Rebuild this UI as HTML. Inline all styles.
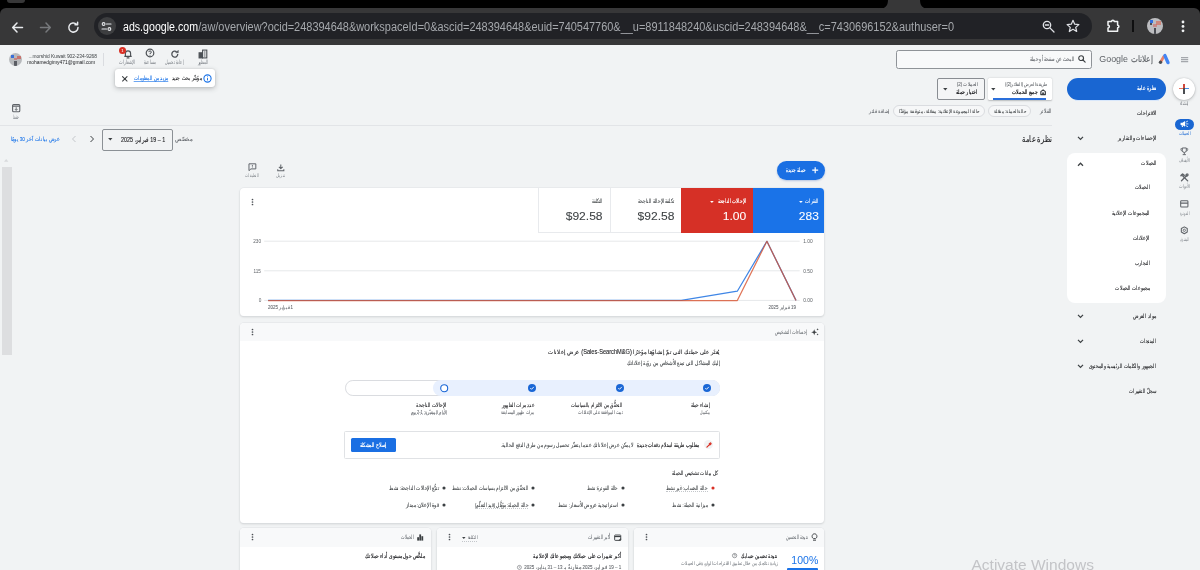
<!DOCTYPE html>
<html lang="ar">
<head>
<meta charset="utf-8">
<title>Google Ads</title>
<style>
*{box-sizing:border-box;margin:0;padding:0}
html,body{width:1200px;height:570px;overflow:hidden}
body{background:#f1f3f4;font-family:"Liberation Sans",sans-serif;color:#202124;position:relative}
.a{position:absolute}
svg{position:absolute;overflow:visible}
#tx{left:0;top:0;font-family:"Liberation Sans",sans-serif;will-change:transform}
.card{position:absolute;background:#fff;border-radius:4px;box-shadow:0 0 0 .6px #e2e4e7,0 1px 2px rgba(60,64,67,.22)}
.hd{position:absolute;left:0;top:0;right:0;height:18px;background:#f8f9fa;border-radius:4px 4px 0 0}
</style>
</head>
<body>
<div class="a" style="left:0px;top:0px;width:1200px;height:20px;background:#000"></div>
<div class="a" style="left:7px;top:0px;width:18px;height:3px;background:#373738;border-radius:0 0 4px 4px"></div>
<div class="a" style="left:0px;top:8px;width:1200px;height:37px;background:#373738;border-radius:6px 6px 0 0"></div>
<svg style="left:878px;top:0" width="52" height="9" viewBox="0 0 52 9"><path d="M0 9 C7 9 10 6 10 0 L42 0 C42 6 45 9 52 9 Z" fill="#373738"/></svg>
<div class="a" style="left:94px;top:13px;width:998px;height:26px;border-radius:13px;background:#212226"></div>
<div class="a" style="left:97.5px;top:17px;width:18px;height:18px;border-radius:50%;background:#3d3e40"></div>
<svg style="left:11px;top:20.5px" width="13" height="13" viewBox="0 0 13 13" fill="none" stroke="#e8eaed" stroke-width="1.5" stroke-linecap="round" stroke-linejoin="round"><path d="M11.5 6.5H2M6 2L1.7 6.5L6 11"/></svg>
<svg style="left:39px;top:20.5px" width="13" height="13" viewBox="0 0 13 13" fill="none" stroke="#77797c" stroke-width="1.5" stroke-linecap="round" stroke-linejoin="round"><path d="M1.5 6.5H11M7 2L11.3 6.5L7 11"/></svg>
<svg style="left:67px;top:20.6px" width="13" height="13" viewBox="0 0 13 13" fill="none" stroke="#e8eaed" stroke-width="1.5" stroke-linecap="round" stroke-linejoin="round"><path d="M11 6.5A4.6 4.6 0 1 1 9.6 3.2"/><path d="M10.6 1.2V3.8H8"/></svg>
<svg style="left:101px;top:21px" width="11" height="11" viewBox="0 0 11 11" fill="none" stroke="#e8eaed" stroke-width="1.1" stroke-linecap="round"><circle cx="2.6" cy="3" r="1.4"/><path d="M5.5 3H10"/><circle cx="8.4" cy="8" r="1.4"/><path d="M1 8H5.5"/></svg>
<svg style="left:1042px;top:20px" width="13" height="13" viewBox="0 0 13 13" fill="none" stroke="#dfe1e5" stroke-width="1.3" stroke-linecap="round"><circle cx="5" cy="5" r="3.7"/><path d="M7.9 7.9L12 12M3.3 5H6.7"/></svg>
<svg style="left:1066px;top:19px" width="14" height="14" viewBox="0 0 14 14" fill="none" stroke="#dfe1e5" stroke-width="1.2" stroke-linejoin="round"><path d="M7 1.3L8.7 5.2L12.9 5.6L9.7 8.4L10.7 12.5L7 10.3L3.3 12.5L4.3 8.4L1.1 5.6L5.3 5.2Z"/></svg>
<svg style="left:1106px;top:18.4px" width="15" height="15" viewBox="0 0 15 15" fill="none" stroke="#f1f3f4" stroke-width="1.5" stroke-linejoin="round"><path d="M2 3.6H5.6A1.3 1.3 0 0 1 8.2 3.6H11.6V7.2A1.3 1.3 0 0 1 11.6 9.8V13.2H2V10A1.4 1.4 0 0 0 2 7.2Z"/></svg>
<div class="a" style="left:1132px;top:20px;width:1.5px;height:12px;background:#0f0f10"></div>
<div class="a" style="left:1147px;top:18px;width:16px;height:16px;border-radius:50%;background:#bcbdc0;overflow:hidden"><div class="a" style="left:2.5px;top:2px;width:3px;height:3.4px;background:#2f6fe0"></div><div class="a" style="left:9px;top:3px;width:4.5px;height:4px;background:#d9624f;opacity:.6"></div><div class="a" style="left:6px;top:6px;width:4px;height:2.5px;background:#cf6a66;opacity:.6"></div><div class="a" style="left:7px;top:9.5px;width:2.4px;height:6.5px;background:#4a4c52"></div><div class="a" style="left:2.6px;top:5.4px;width:2.6px;height:2px;background:#4a4c52"></div></div>
<svg style="left:1181px;top:19.6px" width="4" height="13" viewBox="0 0 4 13" fill="#f1f3f4"><circle cx="2" cy="2" r="1.4"/><circle cx="2" cy="6.4" r="1.4"/><circle cx="2" cy="10.8" r="1.4"/></svg>
<div class="a" style="left:9px;top:53px;width:13px;height:13px;border-radius:50%;background:#b7b9bc;overflow:hidden"><div class="a" style="left:1.6px;top:2px;width:3px;height:3px;background:#3a6fd8"></div><div class="a" style="left:8px;top:3px;width:3.6px;height:3.4px;background:#d0564c;opacity:.7"></div><div class="a" style="left:5px;top:4.6px;width:3px;height:2.4px;background:#c9625e;opacity:.6"></div><div class="a" style="left:5.4px;top:7.6px;width:2.4px;height:5.4px;background:#5a5c63"></div></div>
<div class="a" style="left:102.5px;top:53px;width:1px;height:12.5px;background:#dadce0"></div>
<svg style="left:122.5px;top:49px" width="10" height="10" viewBox="0 0 10 10" fill="none" stroke="#4d5156" stroke-width="1.15"><path d="M2.4 7.2V4.5A2.6 2.6 0 0 1 7.6 4.5V7.2M1.3 7.3H8.7"/><path d="M4.1 8.9H5.9" stroke-linecap="round"/></svg>
<div class="a" style="left:118.7px;top:46.5px;width:7.4px;height:7.4px;border-radius:50%;background:#d93025"></div>
<svg style="left:144.8px;top:48.4px" width="10" height="10" viewBox="0 0 10 10" fill="none" stroke="#4d5156" stroke-width="1.2"><circle cx="5" cy="5" r="3.8"/><path d="M3.8 4.1A1.25 1.25 0 1 1 5 5.4V6.1" stroke-width="1"/><circle cx="5" cy="7.3" r=".5" fill="#4d5156" stroke="none"/></svg>
<svg style="left:169.8px;top:48.6px" width="9.6" height="9.6" viewBox="0 0 10 10" fill="none" stroke="#4d5156" stroke-width="1.35"><path d="M8.1 5.3A3.1 3.1 0 1 1 6.9 2.9"/><path d="M8.7 1.2V4H5.9Z" fill="#4d5156" stroke-width=".4" stroke-linejoin="round"/></svg>
<svg style="left:198px;top:48.5px" width="10" height="10" viewBox="0 0 10 10" fill="none" stroke="#4d5156" stroke-width="1.1"><rect x="1.1" y="3.8" width="3.3" height="5.1" fill="#4d5156"/><rect x="4.6" y="1.1" width="4.2" height="7.8"/><path d="M6 3H7.5M6 5H7.5M6 7H7.5" stroke-width=".9"/></svg>
<div class="a" style="left:115.2px;top:69.1px;width:100px;height:18.2px;background:#fff;border-radius:3px;box-shadow:0 1.5px 5px rgba(60,64,67,.3),0 0 1.5px rgba(60,64,67,.22)"></div>
<svg style="left:121.6px;top:75.9px" width="5.6" height="5.6" viewBox="0 0 6 6" stroke="#3c4043" stroke-width="1.15" stroke-linecap="round"><path d="M.6 .6L5.4 5.4M5.4 .6L.6 5.4"/></svg>
<svg style="left:203.3px;top:73.7px" width="9" height="9" viewBox="0 0 9 9" fill="none" stroke="#1a73e8" stroke-width="1.1"><circle cx="4.5" cy="4.5" r="3.6"/><path d="M4.5 4.1V6.4" stroke-width="1"/><circle cx="4.5" cy="2.8" r=".5" fill="#1a73e8" stroke="none"/></svg>
<svg style="left:11.8px;top:104.4px" width="8.4" height="8.4" viewBox="0 0 8.4 8.4" fill="none" stroke="#5f6368"><rect x=".6" y=".6" width="7.2" height="7.2" rx="1" stroke-width="1.1"/><path d="M.6 2.2H7.8" stroke-width="1.1"/><path d="M4.2 3.2V6.3M2.9 5.1L4.2 6.4L5.5 5.1" stroke-width=".9"/></svg>
<div class="a" style="left:0px;top:124.5px;width:1052px;height:1px;background:#e2e4e7"></div>
<svg style="left:70.8px;top:135.4px" width="6" height="8" viewBox="0 0 6 8" fill="none" stroke="#c4c7cb" stroke-width="1"><path d="M4.5 1L1.5 4L4.5 7"/></svg>
<svg style="left:89.4px;top:135.4px" width="6" height="8" viewBox="0 0 6 8" fill="none" stroke="#3c4043" stroke-width="1"><path d="M1.5 1L4.5 4L1.5 7"/></svg>
<div class="a" style="left:102px;top:129px;width:70.7px;height:21.7px;border:1px solid #8b9095;border-radius:2px"></div>
<svg style="left:108.3px;top:138.4px" width="4.6" height="2.6" viewBox="0 0 5 3"><path d="M0 0H5L2.5 2.8Z" fill="#3c4043"/></svg>
<svg style="left:1180.8px;top:56.5px" width="7.2" height="5.4" viewBox="0 0 8 6" stroke="#a4a7ac" stroke-width="1.35"><path d="M0 .8H8M0 3H8M0 5.2H8"/></svg>
<svg style="left:1158px;top:53px" width="13" height="13" viewBox="0 0 13 13"><path d="M5.7 3.6L3.2 8.2" stroke="#e8826b" stroke-width="2.8" stroke-linecap="round"/><path d="M6.9 2.6L10 9.6" stroke="#4285f4" stroke-width="3.4" stroke-linecap="round"/><circle cx="2.5" cy="9.2" r="1.7" fill="#4a4d51"/></svg>
<div class="a" style="left:896px;top:50px;width:196px;height:18.8px;border:1px solid #8f9398;border-radius:2.5px;background:#f8f9fa"></div>
<svg style="left:1077.6px;top:55.3px" width="7.6" height="7.6" viewBox="0 0 7 7" fill="none" stroke="#3c4043" stroke-width="1.05"><circle cx="2.9" cy="2.9" r="2.2"/><path d="M4.6 4.6L6.6 6.6" stroke-linecap="round"/></svg>
<div class="a" style="left:1173px;top:77.5px;width:22px;height:22px;border-radius:50%;background:#fff;box-shadow:0 1px 3px rgba(60,64,67,.3),0 0 1px rgba(60,64,67,.3)"></div>
<div class="a" style="left:1179.2px;top:87.6px;width:5px;height:1.9px;background:#e8735f"></div>
<div class="a" style="left:1184.2px;top:87.6px;width:5px;height:1.9px;background:#4a8fe8"></div>
<div class="a" style="left:1183.1px;top:84px;width:1.9px;height:4.6px;background:#d0473c"></div>
<div class="a" style="left:1183.1px;top:87.6px;width:1.9px;height:6px;background:#4a4d51"></div>
<div class="a" style="left:1067.4px;top:78px;width:98.6px;height:22px;border-radius:11px;background:#1966d2"></div>
<div class="a" style="left:1075px;top:100.2px;width:84px;height:1px;background:#d2e3fc;opacity:.8"></div>
<div class="a" style="left:987.5px;top:78px;width:64.2px;height:22.4px;background:#fff;border-radius:1.5px;box-shadow:0 .5px 1.5px rgba(60,64,67,.3);overflow:hidden"><div class="a" style="left:5.5px;width:53px;bottom:0;height:2px;background:#2a6fdb"></div></div>
<svg style="left:1040px;top:88.6px" width="6.2" height="6.2" viewBox="0 0 6 6" fill="none" stroke="#3c4043" stroke-width="1.1" stroke-linejoin="round"><path d="M.8 5.4V2.6L3 .8L5.2 2.6V5.4Z"/><path d="M2.3 5.4V3.7H3.7V5.4Z" stroke-width=".6" fill="#3c4043"/></svg>
<svg style="left:991.4px;top:88px" width="4.6" height="2.6" viewBox="0 0 5 3"><path d="M0 0H5L2.5 2.8Z" fill="#3c4043"/></svg>
<div class="a" style="left:937px;top:78px;width:47.8px;height:22px;border:1.2px solid #898d92;border-radius:2px;background:#f4f5f6"></div>
<svg style="left:943px;top:87.8px" width="4.6" height="2.6" viewBox="0 0 5 3"><path d="M0 0H5L2.5 2.8Z" fill="#3c4043"/></svg>
<div class="a" style="left:988px;top:104.6px;width:43.3px;height:12.2px;border:1px solid #dadce0;border-radius:6.1px;background:#f6f7f8"></div>
<div class="a" style="left:893.3px;top:104.6px;width:91.7px;height:12.2px;border:1px solid #dadce0;border-radius:6.1px;background:#f6f7f8"></div>
<div class="a" style="left:1175px;top:118.7px;width:19px;height:11.1px;border-radius:5.6px;background:#1966d2"></div>
<svg style="left:1180.3px;top:120.4px" width="8.4" height="7.8" viewBox="0 0 9 8" fill="#fff"><path d="M.6 2.8H2.6L5.4 .9V7L2.6 5.2H.6Z"/><path d="M1.6 5.2H2.8L3.3 7.4H2.1Z"/><path d="M6.3 2.1L8.2 1.1M6.5 4H8.6M6.3 5.9L8.2 6.9" stroke="#fff" stroke-width=".8" stroke-linecap="round"/></svg>
<svg style="left:1180px;top:146.5px" width="8.6" height="8.6" viewBox="0 0 9 9" fill="none" stroke="#5f6368" stroke-width="1"><path d="M2.4 1H6.6V3.6A2.1 2.1 0 0 1 2.4 3.6Z"/><path d="M2.4 1.8H.9V2.6A1.6 1.6 0 0 0 2.5 4.2M6.6 1.8H8.1V2.6A1.6 1.6 0 0 1 6.5 4.2" stroke-width=".8"/><path d="M4.5 5.7V7.6M2.8 8H6.2"/></svg>
<svg style="left:1179.8px;top:173.4px" width="9" height="9" viewBox="0 0 9 9" fill="none" stroke="#5f6368" stroke-linecap="round"><path d="M2.6 2.8L7.7 7.9" stroke-width="1.3"/><path d="M6.2 3L1.5 7.7" stroke-width="1.3"/><path d="M1 2.6L2.6 1L4.2 2.4" stroke-width="1.5" stroke-linejoin="round"/><path d="M5.6 2.2A1.7 1.7 0 0 1 7.9 .9L6.9 1.9L7.3 2.4L8.3 1.5A1.7 1.7 0 0 1 6.6 3.4" stroke-width=".9" fill="#5f6368"/></svg>
<svg style="left:1180px;top:199.8px" width="8.6" height="7.8" viewBox="0 0 9 8" fill="none" stroke="#5f6368" stroke-width="1.1"><rect x=".7" y=".8" width="7.6" height="6.4" rx=".8"/><path d="M.7 3.2H8.3" stroke-width="1.3"/></svg>
<svg style="left:1180px;top:226.2px" width="8.6" height="8.6" viewBox="0 0 9 9" fill="none" stroke="#5f6368"><path d="M4.5 .9L7.6 2.7V6.3L4.5 8.1L1.4 6.3V2.7Z" stroke-width="1.1" stroke-linejoin="round"/><circle cx="4.5" cy="4.5" r="1.2" stroke-width=".9"/></svg>
<svg style="left:1077.2px;top:136.2px" width="7" height="4.6" viewBox="0 0 7 4.6" fill="none" stroke="#3c4043" stroke-width="1.25"><path d="M1 .9L3.5 3.4L6 .9"/></svg>
<div class="a" style="left:1067.3px;top:153px;width:98.4px;height:150px;background:#fff;border-radius:8px"></div>
<svg style="left:1077.1px;top:162.0px" width="7" height="4.6" viewBox="0 0 7 4.6" fill="none" stroke="#3c4043" stroke-width="1.25"><path d="M1 3.7L3.5 1.2L6 3.7"/></svg>
<svg style="left:1077.0px;top:314.2px" width="7" height="4.6" viewBox="0 0 7 4.6" fill="none" stroke="#3c4043" stroke-width="1.25"><path d="M1 .9L3.5 3.4L6 .9"/></svg>
<svg style="left:1077.0px;top:339.2px" width="7" height="4.6" viewBox="0 0 7 4.6" fill="none" stroke="#3c4043" stroke-width="1.25"><path d="M1 .9L3.5 3.4L6 .9"/></svg>
<svg style="left:1077.0px;top:364.2px" width="7" height="4.6" viewBox="0 0 7 4.6" fill="none" stroke="#3c4043" stroke-width="1.25"><path d="M1 .9L3.5 3.4L6 .9"/></svg>
<div class="a" style="left:1.9px;top:166.6px;width:9.7px;height:188.6px;background:#dddee0"></div>
<svg style="left:4.4px;top:159.2px" width="4.4" height="2.8" viewBox="0 0 5 3"><path d="M0 3H5L2.5 0Z" fill="#d8dadd"/></svg>
<svg style="left:247.6px;top:163.2px" width="8.8" height="8.4" viewBox="0 0 9 8.5" fill="none" stroke="#5f6368" stroke-width="1"><path d="M1 .8H8V6H3L1 7.8Z" stroke-linejoin="round"/><path d="M4.5 2V3.7" stroke-width=".9"/><circle cx="4.5" cy="4.8" r=".4" fill="#5f6368" stroke="none"/></svg>
<svg style="left:276.6px;top:163.6px" width="7.6" height="7.6" viewBox="0 0 8 8" fill="none" stroke="#5f6368" stroke-width="1.1"><path d="M4 .6V4.6M2 3L4 5L6 3" stroke-linejoin="round"/><path d="M.8 5.6V7.2H7.2V5.6"/></svg>
<div class="a" style="left:777px;top:161.3px;width:47.5px;height:18.8px;border-radius:9.4px;background:#1a6fe3;box-shadow:0 1px 2px rgba(26,80,180,.28)"></div>
<svg style="left:811.8px;top:167.3px" width="6.4" height="6.4" viewBox="0 0 6 6" stroke="#fff" stroke-width="1.1"><path d="M3 .2V5.8M.2 3H5.8"/></svg>
<div class="card" style="left:239.8px;top:188px;width:584.6px;height:128px"></div>
<svg style="left:251.3px;top:198.3px" width="3" height="8" viewBox="0 0 3 8" fill="#4d5156"><circle cx="1.5" cy="1.5" r=".85"/><circle cx="1.5" cy="4" r=".85"/><circle cx="1.5" cy="6.5" r=".85"/></svg>
<div class="a" style="left:537.5px;top:188.3px;width:72px;height:45px;border-left:1px solid #e8eaed;border-bottom:1px solid #e8eaed"></div>
<div class="a" style="left:609.5px;top:188.3px;width:71.4px;height:45px;border-left:1px solid #e8eaed;border-bottom:1px solid #e8eaed"></div>
<div class="a" style="left:680.8px;top:188.2px;width:71.8px;height:45px;background:#d63026"></div>
<div class="a" style="left:752.5px;top:188.2px;width:71.9px;height:45px;background:#1a73e8;border-radius:0 4px 0 0"></div>
<svg style="left:798.6px;top:200.6px" width="3.8" height="2.2" viewBox="0 0 5 3"><path d="M0 0H5L2.5 2.8Z" fill="#fff"/></svg>
<svg style="left:710px;top:200.6px" width="3.8" height="2.2" viewBox="0 0 5 3"><path d="M0 0H5L2.5 2.8Z" fill="#fff"/></svg>
<svg style="left:0;top:0" width="1200" height="570" viewBox="0 0 1200 570" fill="none"><path d="M264.2 241.2H799.7" stroke="#e6e8ea" stroke-width="1"/><path d="M264.2 270.8H799.7" stroke="#e6e8ea" stroke-width="1"/><path d="M264.2 300.4H799.7" stroke="#e6e8ea" stroke-width="1"/><path d="M268.1 300.4H681.3L737.3 291.2L766.9 241.3L796 300.4" stroke="#3f86e6" stroke-width="1.25" stroke-linejoin="round"/><path d="M268.1 300.5H737.3L766.9 241.3L796 300.5" stroke="#d8522f" stroke-width="1.25" stroke-linejoin="round" opacity=".8"/></svg>
<div class="card" style="left:239.8px;top:322.6px;width:584.6px;height:200px"><div class="hd"></div></div>
<svg style="left:251.3px;top:327.8px" width="3" height="8" viewBox="0 0 3 8" fill="#4d5156"><circle cx="1.5" cy="1.5" r=".85"/><circle cx="1.5" cy="4" r=".85"/><circle cx="1.5" cy="6.5" r=".85"/></svg>
<svg style="left:810.8px;top:328px" width="8" height="8" viewBox="0 0 8 8" fill="#3c4043"><path d="M3.2 1.2L4 3.4L6.2 4.2L4 5L3.2 7.2L2.4 5L.2 4.2L2.4 3.4Z"/><path d="M6.6 .2L6.95 1.05L7.8 1.4L6.95 1.75L6.6 2.6L6.25 1.75L5.4 1.4L6.25 1.05Z"/><path d="M6.6 5.4L6.9 6.1L7.6 6.4L6.9 6.7L6.6 7.4L6.3 6.7L5.6 6.4L6.3 6.1Z"/></svg>
<div class="a" style="left:345.2px;top:380.2px;width:374.8px;height:15.7px;border-radius:7.85px;background:#fff;border:1px solid #dadce0"></div>
<div class="a" style="left:433.4px;top:380.2px;width:286.6px;height:15.7px;border-radius:7.85px;background:#e8f0fe"></div>
<svg style="left:703px;top:384px" width="8" height="8" viewBox="0 0 8 8"><circle cx="4" cy="4" r="4" fill="#1a67d6"/><path d="M2.3 4.1L3.5 5.3L5.8 2.9" fill="none" stroke="#fff" stroke-width=".9"/></svg>
<svg style="left:615.5px;top:384px" width="8" height="8" viewBox="0 0 8 8"><circle cx="4" cy="4" r="4" fill="#1a67d6"/><path d="M2.3 4.1L3.5 5.3L5.8 2.9" fill="none" stroke="#fff" stroke-width=".9"/></svg>
<svg style="left:527.6px;top:384px" width="8" height="8" viewBox="0 0 8 8"><circle cx="4" cy="4" r="4" fill="#1a67d6"/><path d="M2.3 4.1L3.5 5.3L5.8 2.9" fill="none" stroke="#fff" stroke-width=".9"/></svg>
<svg style="left:439.8px;top:383.8px" width="8.4" height="8.4" viewBox="0 0 8.4 8.4"><circle cx="4.2" cy="4.2" r="3.5" fill="#fff" stroke="#1a67d6" stroke-width="1.1"/></svg>
<div class="a" style="left:410.6px;top:414.4px;width:36.4px;height:0px;border-top:.5px dotted #c4c7cb"></div>
<div class="a" style="left:343.5px;top:431.4px;width:376.2px;height:28px;border:1px solid #e0e2e5;border-radius:1.5px"></div>
<div class="a" style="left:350.8px;top:438.3px;width:45.2px;height:13.7px;background:#1a6fe3;border-radius:1.5px"></div>
<div class="a" style="left:704.1px;top:440.1px;width:9px;height:9px;border-radius:50%;background:#f1f3f4"></div>
<svg style="left:705.6px;top:441.6px" width="6" height="6" viewBox="0 0 6 6" fill="none" stroke="#d93025" stroke-linecap="round"><path d="M.9 5.1L3.4 2.6" stroke-width="1.2"/><path d="M3.1 1.6A1.5 1.5 0 0 1 5 .9L4 1.9L4.3 2.3L5.2 1.4A1.5 1.5 0 0 1 3.4 3" stroke-width=".9" fill="#d93025"/></svg>
<svg style="left:710.6px;top:486.3px" width="4" height="4" viewBox="0 0 4 4"><circle cx="2" cy="2" r="1.55" fill="#d93025"/></svg>
<div class="a" style="left:666px;top:490.9px;width:41.6px;height:0px;border-top:.5px dotted #c4c7cb"></div>
<svg style="left:620.6px;top:486.3px" width="4" height="4" viewBox="0 0 4 4"><circle cx="2" cy="2" r="1.55" fill="#3c4043"/></svg>
<svg style="left:531.4px;top:486.3px" width="4" height="4" viewBox="0 0 4 4"><circle cx="2" cy="2" r="1.55" fill="#3c4043"/></svg>
<svg style="left:441.7px;top:486.3px" width="4" height="4" viewBox="0 0 4 4"><circle cx="2" cy="2" r="1.55" fill="#3c4043"/></svg>
<svg style="left:710.6px;top:503.2px" width="4" height="4" viewBox="0 0 4 4"><circle cx="2" cy="2" r="1.55" fill="#3c4043"/></svg>
<svg style="left:620.6px;top:503.2px" width="4" height="4" viewBox="0 0 4 4"><circle cx="2" cy="2" r="1.55" fill="#3c4043"/></svg>
<svg style="left:531.4px;top:503.2px" width="4" height="4" viewBox="0 0 4 4"><circle cx="2" cy="2" r="1.55" fill="#3c4043"/></svg>
<div class="a" style="left:475px;top:507.8px;width:53.4px;height:0px;border-top:.5px dotted #c4c7cb"></div>
<svg style="left:441.7px;top:503.2px" width="4" height="4" viewBox="0 0 4 4"><circle cx="2" cy="2" r="1.55" fill="#3c4043"/></svg>
<div class="card" style="left:633.8px;top:528.4px;width:190.6px;height:60px"><div class="hd" style="height:18.8px"></div></div>
<div class="card" style="left:437.2px;top:528.4px;width:190.4px;height:60px"><div class="hd" style="height:18.8px"></div></div>
<div class="card" style="left:240.2px;top:528.4px;width:190.4px;height:60px"><div class="hd" style="height:18.8px"></div></div>
<svg style="left:811px;top:533.4px" width="7" height="8.4" viewBox="0 0 7 8.4" fill="none" stroke="#3c4043" stroke-width=".95"><path d="M2.3 5.6C.2 4.2 1 .8 3.5 .8C6 .8 6.8 4.2 4.7 5.6Z" stroke-linejoin="round"/><path d="M2.4 7.2H4.6" stroke-linecap="round"/></svg>
<svg style="left:645.3px;top:533.4px" width="3" height="8" viewBox="0 0 3 8" fill="#4d5156"><circle cx="1.5" cy="1.5" r=".85"/><circle cx="1.5" cy="4" r=".85"/><circle cx="1.5" cy="6.5" r=".85"/></svg>
<div class="a" style="left:787px;top:568.3px;width:31px;height:2px;background:#1a73e8;border-radius:1px 1px 0 0"></div>
<svg style="left:732.4px;top:553.2px" width="5.2" height="5.2" viewBox="0 0 6 6" fill="none" stroke="#5f6368" stroke-width=".7"><circle cx="3" cy="3" r="2.5"/><path d="M2.2 2.5A.85 .85 0 1 1 3 3.3V3.8" stroke-width=".6"/></svg>
<svg style="left:614.2px;top:533.8px" width="7.6" height="7.4" viewBox="0 0 8 7.6" fill="none" stroke="#3c4043" stroke-width="1"><rect x=".7" y="1" width="6.4" height="5.6" rx=".6"/><path d="M.7 2.6H7.1" stroke-width="1.2"/><path d="M5 6.6H7.1V4.6Z" fill="#3c4043" stroke-width=".4"/></svg>
<svg style="left:448.0px;top:533.4px" width="3" height="8" viewBox="0 0 3 8" fill="#4d5156"><circle cx="1.5" cy="1.5" r=".85"/><circle cx="1.5" cy="4" r=".85"/><circle cx="1.5" cy="6.5" r=".85"/></svg>
<svg style="left:462.4px;top:536.6px" width="3.6" height="2.1" viewBox="0 0 5 3"><path d="M0 0H5L2.5 2.8Z" fill="#3c4043"/></svg>
<div class="a" style="left:461.6px;top:540.9px;width:15.8px;height:0px;border-top:.5px dotted #c4c7cb"></div>
<svg style="left:516.6px;top:565.2px" width="4.8" height="4.8" viewBox="0 0 6 6" fill="none" stroke="#5f6368" stroke-width=".7"><circle cx="3" cy="3" r="2.5"/><path d="M3 1.6V3.1L4 3.7" stroke-width=".6"/></svg>
<svg style="left:417.4px;top:534px" width="6.4" height="6.6" viewBox="0 0 6.4 6.6" fill="#3c4043"><rect x=".2" y="3.2" width="1.8" height="3.4"/><rect x="2.3" y=".4" width="1.8" height="6.2"/><rect x="4.4" y="2.2" width="1.8" height="4.4"/></svg>
<svg style="left:251.4px;top:533.4px" width="3" height="8" viewBox="0 0 3 8" fill="#4d5156"><circle cx="1.5" cy="1.5" r=".85"/><circle cx="1.5" cy="4" r=".85"/><circle cx="1.5" cy="6.5" r=".85"/></svg>
<svg id="tx" width="1200" height="570" viewBox="0 0 1200 570">
<text x="123" y="30.92" font-size="12" fill="#ffffff" font-weight="400" textLength="75" lengthAdjust="spacingAndGlyphs" >ads.google.com</text>
<text x="198.3" y="30.92" font-size="12" fill="#a5a8ac" font-weight="400" textLength="755.7" lengthAdjust="spacingAndGlyphs" >/aw/overview?ocid=248394648&amp;workspaceId=0&amp;ascid=248394648&amp;euid=740547760&amp;__u=8911848240&amp;uscid=248394648&amp;__c=7430696152&amp;authuser=0</text>
<text x="28.5" y="58.32" font-size="5.6" fill="#3c4043" font-weight="400" textLength="68.5" lengthAdjust="spacingAndGlyphs" >...morshid Kuwait 902-234-9268</text>
<text x="27.2" y="64.22" font-size="5.6" fill="#202124" font-weight="400" textLength="68" lengthAdjust="spacingAndGlyphs" >mohamedgimy471@gmail.com</text>
<text x="121.6" y="51.78" font-size="4.4" fill="#fff" font-weight="700" textLength="1.8" lengthAdjust="spacingAndGlyphs" >1</text>
<text x="135.65" y="63.79" font-size="5.75" fill="#7d8288" font-weight="401" direction="rtl" text-anchor="start" textLength="16.5" lengthAdjust="spacingAndGlyphs" >الإشعارات</text>
<text x="156.0" y="63.79" font-size="5.75" fill="#7d8288" font-weight="401" direction="rtl" text-anchor="start" textLength="12.4" lengthAdjust="spacingAndGlyphs" >مساعدة</text>
<text x="184.1" y="63.79" font-size="5.75" fill="#7d8288" font-weight="401" direction="rtl" text-anchor="start" textLength="19" lengthAdjust="spacingAndGlyphs" >إعادة تحميل</text>
<text x="208.5" y="63.79" font-size="5.75" fill="#7d8288" font-weight="401" direction="rtl" text-anchor="start" textLength="11" lengthAdjust="spacingAndGlyphs" >المظهر</text>
<text x="168.3" y="80.15" font-size="5.98" fill="#1a73e8" font-weight="400" direction="rtl" text-anchor="start" textLength="34.5" lengthAdjust="spacingAndGlyphs" text-decoration="underline" stroke="#1a73e8" stroke-width="0.10">مزيد من المعلومات</text>
<text x="201.8" y="80.15" font-size="5.98" fill="#202124" font-weight="400" direction="rtl" text-anchor="start" textLength="30.3" lengthAdjust="spacingAndGlyphs"  stroke="#202124" stroke-width="0.10">مؤشّر بحث جديد</text>
<text x="19.05" y="119.43" font-size="5.52" fill="#7d8288" font-weight="401" direction="rtl" text-anchor="start" textLength="6.5" lengthAdjust="spacingAndGlyphs" >حفظ</text>
<text x="59.8" y="141.34" font-size="5.98" fill="#1a73e8" font-weight="400" direction="rtl" text-anchor="start" textLength="49.3" lengthAdjust="spacingAndGlyphs"  stroke="#1a73e8" stroke-width="0.10">عرض بيانات آخر 30 يومًا</text>
<text x="165.2" y="141.56" font-size="7.24" fill="#202124" font-weight="400" direction="rtl" text-anchor="start" textLength="44.2" lengthAdjust="spacingAndGlyphs"  stroke="#202124" stroke-width="0.12">1 – 19 فبراير، 2025</text>
<text x="192.3" y="141.39" font-size="5.75" fill="#5f6368" font-weight="400" direction="rtl" text-anchor="start" textLength="16.9" lengthAdjust="spacingAndGlyphs"  stroke="#5f6368" stroke-width="0.09">مخصّص</text>
<text x="1099.3" y="62.45" font-size="9.3" fill="#5f6368" font-weight="400" textLength="28.7" lengthAdjust="spacingAndGlyphs" >Google</text>
<text x="1153" y="62.45" font-size="9.2" fill="#5f6368" font-weight="400" direction="rtl" text-anchor="start" textLength="22" lengthAdjust="spacingAndGlyphs"  stroke="#5f6368" stroke-width="0.15">إعلانات</text>
<text x="1074.4" y="61.09" font-size="5.75" fill="#5f6368" font-weight="400" direction="rtl" text-anchor="start" textLength="44.5" lengthAdjust="spacingAndGlyphs"  stroke="#5f6368" stroke-width="0.09">البحث عن صفحة أو حملة</text>
<text x="1188.25" y="104.77" font-size="5.29" fill="#7d8288" font-weight="401" direction="rtl" text-anchor="start" textLength="8.5" lengthAdjust="spacingAndGlyphs" >إنشاء</text>
<text x="1157" y="89.65" font-size="5.98" fill="#fff" font-weight="700" direction="rtl" text-anchor="start" textLength="20" lengthAdjust="spacingAndGlyphs" >نظرة عامة</text>
<text x="1047.5" y="86.47" font-size="5.29" fill="#5f6368" font-weight="400" direction="rtl" text-anchor="start" textLength="42.5" lengthAdjust="spacingAndGlyphs"  stroke="#5f6368" stroke-width="0.08">طريقة العرض (الفلاتر(2))</text>
<text x="1037.5" y="93.62" font-size="5.86" fill="#202124" font-weight="700" direction="rtl" text-anchor="start" textLength="25.5" lengthAdjust="spacingAndGlyphs" >جميع الحملات</text>
<text x="978" y="86.47" font-size="5.29" fill="#5f6368" font-weight="400" direction="rtl" text-anchor="start" textLength="21.3" lengthAdjust="spacingAndGlyphs"  stroke="#5f6368" stroke-width="0.08">الحملات (2)</text>
<text x="978" y="93.62" font-size="5.86" fill="#202124" font-weight="700" direction="rtl" text-anchor="start" textLength="22.2" lengthAdjust="spacingAndGlyphs" >اختيار حملة</text>
<text x="1051.7" y="113.13" font-size="5.52" fill="#5f6368" font-weight="400" direction="rtl" text-anchor="start" textLength="11.4" lengthAdjust="spacingAndGlyphs"  stroke="#5f6368" stroke-width="0.09">الفلاتر</text>
<text x="1026.3" y="112.97" font-size="5.29" fill="#3c4043" font-weight="400" direction="rtl" text-anchor="start" textLength="32.3" lengthAdjust="spacingAndGlyphs"  stroke="#3c4043" stroke-width="0.08">حالة الحملة: مفعّلة</text>
<text x="979.7" y="112.97" font-size="5.29" fill="#3c4043" font-weight="400" direction="rtl" text-anchor="start" textLength="80.7" lengthAdjust="spacingAndGlyphs"  stroke="#3c4043" stroke-width="0.08">حالة المجموعة الإعلانية: مفعّلة، متوقفة مؤقتًا</text>
<text x="889" y="112.97" font-size="5.29" fill="#5f6368" font-weight="400" direction="rtl" text-anchor="start" textLength="20" lengthAdjust="spacingAndGlyphs"  stroke="#5f6368" stroke-width="0.08">إضافة فلتر</text>
<text x="1052" y="142.05" font-size="9.2" fill="#202124" font-weight="400" direction="rtl" text-anchor="start" textLength="30" lengthAdjust="spacingAndGlyphs"  stroke="#202124" stroke-width="0.15">نظرة عامة</text>
<text x="1190.5" y="135.07" font-size="5.29" fill="#1967d2" font-weight="401" direction="rtl" text-anchor="start" textLength="12" lengthAdjust="spacingAndGlyphs" >الحملات</text>
<text x="1190.15" y="161.77" font-size="5.29" fill="#7d8288" font-weight="401" direction="rtl" text-anchor="start" textLength="11.5" lengthAdjust="spacingAndGlyphs" >الأهداف</text>
<text x="1189.65" y="188.07" font-size="5.29" fill="#7d8288" font-weight="401" direction="rtl" text-anchor="start" textLength="10.5" lengthAdjust="spacingAndGlyphs" >الأدوات</text>
<text x="1189.15" y="215.17" font-size="5.29" fill="#7d8288" font-weight="401" direction="rtl" text-anchor="start" textLength="9.5" lengthAdjust="spacingAndGlyphs" >الفوترة</text>
<text x="1188.9" y="241.27" font-size="5.29" fill="#7d8288" font-weight="401" direction="rtl" text-anchor="start" textLength="9" lengthAdjust="spacingAndGlyphs" >المشرف</text>
<text x="1156.9" y="114.80" font-size="6.21" fill="#202124" font-weight="400" direction="rtl" text-anchor="start" textLength="20.1" lengthAdjust="spacingAndGlyphs"  stroke="#202124" stroke-width="0.10">الاقتراحات</text>
<text x="1156.9" y="140.30" font-size="6.21" fill="#202124" font-weight="400" direction="rtl" text-anchor="start" textLength="38.9" lengthAdjust="spacingAndGlyphs"  stroke="#202124" stroke-width="0.10">الإحصاءات والتقارير</text>
<text x="1156.9" y="164.80" font-size="6.21" fill="#202124" font-weight="400" direction="rtl" text-anchor="start" textLength="15.6" lengthAdjust="spacingAndGlyphs"  stroke="#202124" stroke-width="0.10">الحملات</text>
<text x="1150" y="189.40" font-size="6.21" fill="#202124" font-weight="400" direction="rtl" text-anchor="start" textLength="15" lengthAdjust="spacingAndGlyphs"  stroke="#202124" stroke-width="0.10">الحملات</text>
<text x="1150" y="214.90" font-size="6.21" fill="#202124" font-weight="400" direction="rtl" text-anchor="start" textLength="38.2" lengthAdjust="spacingAndGlyphs"  stroke="#202124" stroke-width="0.10">المجموعات الإعلانية</text>
<text x="1150" y="239.90" font-size="6.21" fill="#202124" font-weight="400" direction="rtl" text-anchor="start" textLength="17.4" lengthAdjust="spacingAndGlyphs"  stroke="#202124" stroke-width="0.10">الإعلانات</text>
<text x="1150" y="264.60" font-size="6.21" fill="#202124" font-weight="400" direction="rtl" text-anchor="start" textLength="15" lengthAdjust="spacingAndGlyphs"  stroke="#202124" stroke-width="0.10">التجارب</text>
<text x="1150" y="290.00" font-size="6.21" fill="#202124" font-weight="400" direction="rtl" text-anchor="start" textLength="34.7" lengthAdjust="spacingAndGlyphs"  stroke="#202124" stroke-width="0.10">مجموعات الحملات</text>
<text x="1156.1" y="318.00" font-size="6.21" fill="#202124" font-weight="400" direction="rtl" text-anchor="start" textLength="22.7" lengthAdjust="spacingAndGlyphs"  stroke="#202124" stroke-width="0.10">مواد العرض</text>
<text x="1156" y="342.90" font-size="6.21" fill="#202124" font-weight="400" direction="rtl" text-anchor="start" textLength="15.7" lengthAdjust="spacingAndGlyphs"  stroke="#202124" stroke-width="0.10">المنتجات</text>
<text x="1156" y="368.00" font-size="6.21" fill="#202124" font-weight="400" direction="rtl" text-anchor="start" textLength="67.4" lengthAdjust="spacingAndGlyphs"  stroke="#202124" stroke-width="0.10">الجمهور والكلمات الرئيسية والمحتوى</text>
<text x="1156.5" y="392.70" font-size="6.21" fill="#202124" font-weight="400" direction="rtl" text-anchor="start" textLength="27.5" lengthAdjust="spacingAndGlyphs"  stroke="#202124" stroke-width="0.10">سجلّ التغييرات</text>
<text x="258.75" y="177.27" font-size="5.29" fill="#7d8288" font-weight="401" direction="rtl" text-anchor="start" textLength="13.7" lengthAdjust="spacingAndGlyphs" >التعليقات</text>
<text x="284.95000000000005" y="177.27" font-size="5.29" fill="#7d8288" font-weight="401" direction="rtl" text-anchor="start" textLength="8.7" lengthAdjust="spacingAndGlyphs" >تنزيل</text>
<text x="805.5" y="172.43" font-size="5.52" fill="#fff" font-weight="700" direction="rtl" text-anchor="start" textLength="20" lengthAdjust="spacingAndGlyphs" >حملة جديدة</text>
<text x="818.8" y="203.13" font-size="5.52" fill="#fff" font-weight="400" direction="rtl" text-anchor="start" textLength="13.8" lengthAdjust="spacingAndGlyphs"  stroke="#fff" stroke-width="0.09">النقرات</text>
<text x="798.8" y="219.76" font-size="11" fill="#fff" font-weight="400" textLength="20" lengthAdjust="spacingAndGlyphs" stroke="#fff" stroke-width=".07">283</text>
<text x="746.3" y="203.13" font-size="5.52" fill="#fff" font-weight="700" direction="rtl" text-anchor="start" textLength="28.8" lengthAdjust="spacingAndGlyphs" >الإحالات الناجحة</text>
<text x="722.7" y="219.76" font-size="11" fill="#fff" font-weight="400" textLength="23.6" lengthAdjust="spacingAndGlyphs" stroke="#fff" stroke-width=".07">1.00</text>
<text x="674.5" y="202.73" font-size="5.52" fill="#3c4043" font-weight="400" direction="rtl" text-anchor="start" textLength="36.5" lengthAdjust="spacingAndGlyphs"  stroke="#3c4043" stroke-width="0.09">تكلفة الإحالة الناجحة</text>
<text x="637.6" y="219.76" font-size="11" fill="#3c4043" font-weight="400" textLength="36.9" lengthAdjust="spacingAndGlyphs" stroke="#3c4043" stroke-width=".07">$92.58</text>
<text x="602.5" y="202.73" font-size="5.52" fill="#3c4043" font-weight="400" direction="rtl" text-anchor="start" textLength="10.7" lengthAdjust="spacingAndGlyphs"  stroke="#3c4043" stroke-width="0.09">التكلفة</text>
<text x="565.7" y="219.76" font-size="11" fill="#3c4043" font-weight="400" textLength="36.9" lengthAdjust="spacingAndGlyphs" stroke="#3c4043" stroke-width=".07">$92.58</text>
<text x="253.2" y="243.03" font-size="4.8" fill="#5f6368" font-weight="400" textLength="7.8" lengthAdjust="spacingAndGlyphs" >230</text>
<text x="253.4" y="272.63" font-size="4.8" fill="#5f6368" font-weight="400" textLength="7.4" lengthAdjust="spacingAndGlyphs" >115</text>
<text x="258.7" y="302.23" font-size="4.8" fill="#5f6368" font-weight="400" textLength="2.6" lengthAdjust="spacingAndGlyphs" >0</text>
<text x="803.3" y="243.03" font-size="4.8" fill="#5f6368" font-weight="400" textLength="9.5" lengthAdjust="spacingAndGlyphs" >1.00</text>
<text x="803.3" y="272.63" font-size="4.8" fill="#5f6368" font-weight="400" textLength="9.5" lengthAdjust="spacingAndGlyphs" >0.50</text>
<text x="803.3" y="302.23" font-size="4.8" fill="#5f6368" font-weight="400" textLength="9.5" lengthAdjust="spacingAndGlyphs" >0.00</text>
<text x="293.1" y="308.97" font-size="5.29" fill="#5f6368" font-weight="400" direction="rtl" text-anchor="start" textLength="25" lengthAdjust="spacingAndGlyphs"  stroke="#5f6368" stroke-width="0.08">1 فبراير 2025</text>
<text x="796" y="308.97" font-size="5.29" fill="#5f6368" font-weight="400" direction="rtl" text-anchor="start" textLength="27.4" lengthAdjust="spacingAndGlyphs"  stroke="#5f6368" stroke-width="0.08">19 فبراير 2025</text>
<text x="807.5" y="333.73" font-size="5.52" fill="#70757a" font-weight="400" direction="rtl" text-anchor="start" textLength="32.2" lengthAdjust="spacingAndGlyphs"  stroke="#70757a" stroke-width="0.09">إحصاءات التشخيص</text>
<text x="720" y="354.26" font-size="6.44" fill="#202124" font-weight="400" direction="rtl" text-anchor="start" textLength="171.7" lengthAdjust="spacingAndGlyphs"  stroke="#202124" stroke-width="0.10">يُعثَر على حملتك التي تمّ إنشاؤها مؤخرًا (Sales-SearchM&amp;G) عرض إعلانات</text>
<text x="720" y="365.34" font-size="5.98" fill="#3c4043" font-weight="400" direction="rtl" text-anchor="start" textLength="93" lengthAdjust="spacingAndGlyphs"  stroke="#3c4043" stroke-width="0.10">إليك المشاكل التي تمنع الأشخاص من رؤية إعلاناتك</text>
<text x="710.3" y="406.55" font-size="5.98" fill="#202124" font-weight="400" direction="rtl" text-anchor="start" textLength="19.8" lengthAdjust="spacingAndGlyphs"  stroke="#202124" stroke-width="0.10">إنشاء حملة</text>
<text x="710.3" y="413.71" font-size="5.06" fill="#5f6368" font-weight="400" direction="rtl" text-anchor="start" textLength="10" lengthAdjust="spacingAndGlyphs"  stroke="#5f6368" stroke-width="0.08">مكتمل</text>
<text x="622.5" y="406.55" font-size="5.98" fill="#202124" font-weight="400" direction="rtl" text-anchor="start" textLength="51.7" lengthAdjust="spacingAndGlyphs"  stroke="#202124" stroke-width="0.10">التحقُّق من الالتزام بالسياسات</text>
<text x="622.5" y="413.71" font-size="5.06" fill="#5f6368" font-weight="400" direction="rtl" text-anchor="start" textLength="44.2" lengthAdjust="spacingAndGlyphs"  stroke="#5f6368" stroke-width="0.08">تمت الموافقة على الإعلانات</text>
<text x="534.5" y="406.55" font-size="5.98" fill="#202124" font-weight="400" direction="rtl" text-anchor="start" textLength="32.4" lengthAdjust="spacingAndGlyphs"  stroke="#202124" stroke-width="0.10">عدد مرات الظهور</text>
<text x="534.5" y="413.71" font-size="5.06" fill="#5f6368" font-weight="400" direction="rtl" text-anchor="start" textLength="33.5" lengthAdjust="spacingAndGlyphs"  stroke="#5f6368" stroke-width="0.08">مرات ظهور المسابقة</text>
<text x="447" y="406.55" font-size="5.98" fill="#202124" font-weight="400" direction="rtl" text-anchor="start" textLength="30.6" lengthAdjust="spacingAndGlyphs"  stroke="#202124" stroke-width="0.10">الإحالات الناجحة</text>
<text x="447" y="413.51" font-size="5.06" fill="#5f6368" font-weight="400" direction="rtl" text-anchor="start" textLength="36.4" lengthAdjust="spacingAndGlyphs"  stroke="#5f6368" stroke-width="0.08">الأيام المقدّرة: 1-2 يوم</text>
<text x="387" y="446.99" font-size="5.75" fill="#fff" font-weight="700" direction="rtl" text-anchor="start" textLength="27.5" lengthAdjust="spacingAndGlyphs" >إصلاح المشكلة</text>
<text x="699" y="446.59" font-size="5.75" fill="#202124" font-weight="400" direction="rtl" text-anchor="start" textLength="62" lengthAdjust="spacingAndGlyphs"  stroke="#202124" stroke-width="0.16">مطلوب طريقة استلام دفعات جديدة</text>
<text x="633.5" y="446.59" font-size="5.75" fill="#3c4043" font-weight="400" direction="rtl" text-anchor="start" textLength="132.5" lengthAdjust="spacingAndGlyphs"  stroke="#3c4043" stroke-width="0.09">لا يمكن عرض إعلاناتك عندما يتعذّر تحصيل رسوم من طرق الدفع الحالية.</text>
<text x="718.6" y="474.89" font-size="5.75" fill="#202124" font-weight="400" direction="rtl" text-anchor="start" textLength="46.6" lengthAdjust="spacingAndGlyphs"  stroke="#202124" stroke-width="0.09">كل بيانات تشخيص الحملة</text>
<text x="707.6" y="489.99" font-size="5.75" fill="#3c4043" font-weight="400" direction="rtl" text-anchor="start" textLength="41.6" lengthAdjust="spacingAndGlyphs"  stroke="#3c4043" stroke-width="0.09">حالة الحساب: غير نشط</text>
<text x="618" y="489.99" font-size="5.75" fill="#3c4043" font-weight="400" direction="rtl" text-anchor="start" textLength="31.4" lengthAdjust="spacingAndGlyphs"  stroke="#3c4043" stroke-width="0.09">حالة الفوترة: نشط</text>
<text x="528.4" y="489.99" font-size="5.75" fill="#3c4043" font-weight="400" direction="rtl" text-anchor="start" textLength="76.1" lengthAdjust="spacingAndGlyphs"  stroke="#3c4043" stroke-width="0.09">التحقّق من الالتزام بسياسات الحملات: نشط</text>
<text x="439" y="489.99" font-size="5.75" fill="#3c4043" font-weight="400" direction="rtl" text-anchor="start" textLength="49.7" lengthAdjust="spacingAndGlyphs"  stroke="#3c4043" stroke-width="0.09">تتبُّع الإحالات الناجحة: نشط</text>
<text x="707.6" y="506.89" font-size="5.75" fill="#3c4043" font-weight="400" direction="rtl" text-anchor="start" textLength="35.2" lengthAdjust="spacingAndGlyphs"  stroke="#3c4043" stroke-width="0.09">ميزانية الحملة: نشط</text>
<text x="618" y="506.89" font-size="5.75" fill="#3c4043" font-weight="400" direction="rtl" text-anchor="start" textLength="60" lengthAdjust="spacingAndGlyphs"  stroke="#3c4043" stroke-width="0.09">استراتيجية عروض الأسعار: نشط</text>
<text x="528.4" y="506.89" font-size="5.75" fill="#3c4043" font-weight="400" direction="rtl" text-anchor="start" textLength="53.4" lengthAdjust="spacingAndGlyphs"  stroke="#3c4043" stroke-width="0.09">حالة الحملة: مؤهَّل (قيد التعلّم)</text>
<text x="439" y="506.89" font-size="5.75" fill="#3c4043" font-weight="400" direction="rtl" text-anchor="start" textLength="33" lengthAdjust="spacingAndGlyphs"  stroke="#3c4043" stroke-width="0.09">قوة الإعلان: ممتاز</text>
<text x="808" y="539.43" font-size="5.52" fill="#70757a" font-weight="400" direction="rtl" text-anchor="start" textLength="22.5" lengthAdjust="spacingAndGlyphs"  stroke="#70757a" stroke-width="0.09">نتيجة التحسين</text>
<text x="791.3" y="564.23" font-size="11.2" fill="#1a73e8" font-weight="400" textLength="27" lengthAdjust="spacingAndGlyphs" >100%</text>
<text x="777.5" y="557.75" font-size="5.98" fill="#202124" font-weight="400" direction="rtl" text-anchor="start" textLength="36.2" lengthAdjust="spacingAndGlyphs"  stroke="#202124" stroke-width="0.17">نتيجة تحسين حسابك</text>
<text x="777.5" y="564.87" font-size="5.29" fill="#80868b" font-weight="400" direction="rtl" text-anchor="start" textLength="96.2" lengthAdjust="spacingAndGlyphs"  stroke="#80868b" stroke-width="0.08">زيادة نتائجك من خلال تطبيق الاقتراحات الواردة في الحملات</text>
<text x="610.8" y="539.43" font-size="5.52" fill="#70757a" font-weight="400" direction="rtl" text-anchor="start" textLength="23.3" lengthAdjust="spacingAndGlyphs"  stroke="#70757a" stroke-width="0.09">أكبر التغييرات</text>
<text x="477.2" y="539.17" font-size="5.29" fill="#5f6368" font-weight="400" direction="rtl" text-anchor="start" textLength="9.6" lengthAdjust="spacingAndGlyphs"  stroke="#5f6368" stroke-width="0.08">التكلفة</text>
<text x="621.3" y="558.25" font-size="5.98" fill="#202124" font-weight="400" direction="rtl" text-anchor="start" textLength="88" lengthAdjust="spacingAndGlyphs"  stroke="#202124" stroke-width="0.17">أكبر تغييرات على حملاتك ومجموعاتك الإعلانية</text>
<text x="621.3" y="569.43" font-size="5.52" fill="#5f6368" font-weight="400" direction="rtl" text-anchor="start" textLength="97" lengthAdjust="spacingAndGlyphs"  stroke="#5f6368" stroke-width="0.09">1 – 19 فبراير، 2025 مقارنةً بـ 13 – 31 يناير، 2025</text>
<text x="413.8" y="539.43" font-size="5.52" fill="#70757a" font-weight="400" direction="rtl" text-anchor="start" textLength="13" lengthAdjust="spacingAndGlyphs"  stroke="#70757a" stroke-width="0.09">الحملات</text>
<text x="424.9" y="557.85" font-size="5.98" fill="#202124" font-weight="400" direction="rtl" text-anchor="start" textLength="59.5" lengthAdjust="spacingAndGlyphs"  stroke="#202124" stroke-width="0.17">ملخَّص حول مستوى أداء حملاتك</text>
<text x="971.5" y="569.64" font-size="15.4" fill="#c3c4c7" font-weight="400" textLength="122.4" lengthAdjust="spacingAndGlyphs" >Activate Windows</text>
</svg>
</body>
</html>
